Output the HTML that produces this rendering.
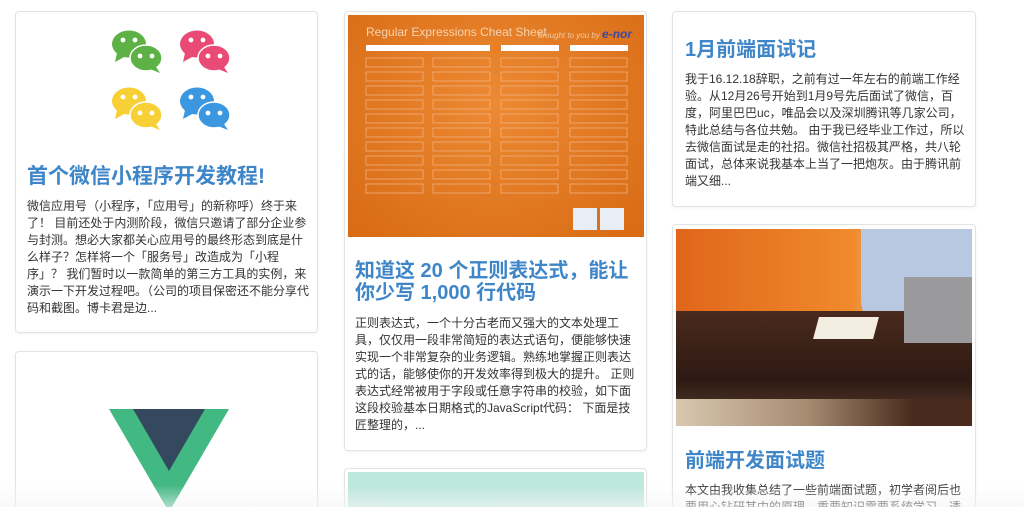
<!DOCTYPE html>
<html><head><meta charset="utf-8"><style>
*{margin:0;padding:0;box-sizing:border-box}
html,body{width:1024px;height:507px;overflow:hidden}
body{background:#fff;position:relative;font-family:"Liberation Sans","Noto Sans CJK SC",sans-serif;color:#333}
.card{position:absolute;background:#fff;border:1px solid #e3e3e3;border-radius:4px;box-shadow:0 1px 2px rgba(0,0,0,.05);overflow:hidden}
.t{color:#3f86c8;font-weight:bold;font-size:20px;line-height:22px}
.p{font-size:12px;line-height:17px;color:#333}
.fade{position:absolute;left:0;right:0;bottom:0;height:22px;background:linear-gradient(rgba(255,255,255,0),rgba(245,245,245,.6))}
</style></head><body>

<div class="card" style="left:15px;top:11px;width:303px;height:322px">
<svg width="303" height="140" style="position:absolute;left:0;top:0">
<defs><g id="w">
<ellipse cx="17" cy="13" rx="17" ry="13.5"/><path d="M5 22 L3 31 L14 25Z"/>
<ellipse cx="34" cy="27" rx="16" ry="13" stroke="#fff" stroke-width="1.5"/><path d="M44 36 L48 42 L38 38Z"/>
<circle cx="11" cy="9" r="2.4" fill="#fff"/><circle cx="23" cy="9" r="2.4" fill="#fff"/>
<circle cx="28" cy="25" r="2.4" fill="#fff"/><circle cx="40" cy="25" r="2.4" fill="#fff"/>
</g></defs>
<use href="#w" x="96" y="19" fill="#5db145"/>
<use href="#w" x="164" y="19" fill="#ea4a76"/>
<use href="#w" x="96" y="76" fill="#f6d035"/>
<use href="#w" x="164" y="76" fill="#3a97e0"/>
</svg>
<div style="position:absolute;left:11px;top:153px;width:285px">
<div class="t" style="font-size:21px;line-height:24px">首个微信小程序开发教程!</div>
<div class="p" style="margin-top:9px">微信应用号（小程序，「应用号」的新称呼）终于来了！ 目前还处于内测阶段，微信只邀请了部分企业参与封测。想必大家都关心应用号的最终形态到底是什么样子？怎样将一个「服务号」改造成为「小程序」？ 我们暂时以一款简单的第三方工具的实例，来演示一下开发过程吧。（公司的项目保密还不能分享代码和截图。博卡君是边...</div>
</div></div>

<div class="card" style="left:15px;top:351px;width:303px;height:170px">
<svg width="303" height="160" style="position:absolute;left:0;top:0">
<path d="M93 57 L213 57 L153 160Z" fill="#42b883"/>
<path d="M117 57 L189 57 L153 119Z" fill="#35495e"/>
</svg></div>

<div class="card" style="left:344px;top:11px;width:303px;height:440px">
<div style="position:absolute;left:3px;top:3px;width:296px;height:222px;background:radial-gradient(ellipse at 50% 40%,#ec8a33,#d86a14)">
<div style="position:absolute;left:18px;top:10px;color:#f6d3b0;font-size:12px">Regular Expressions Cheat Sheet</div>
<div style="position:absolute;left:190px;top:12px;color:#f3c9a0;font-size:8px;font-style:italic">brought to you by <b style="font-size:12px;color:#3b4aa0">e-nor</b></div>
<svg width="296" height="222" style="position:absolute;left:0;top:0" fill="none" stroke="#f3b68a" stroke-width=".7">
<rect x="18" y="30" width="124" height="6" fill="#fff" stroke="none"/>
<rect x="153" y="30" width="58" height="6" fill="#fff" stroke="none"/>
<rect x="222" y="30" width="58" height="6" fill="#fff" stroke="none"/>
<g id="c1"><rect x="18" y="43" width="57" height="9"/><rect x="18" y="57" width="57" height="9"/><rect x="18" y="71" width="57" height="9"/><rect x="18" y="85" width="57" height="9"/><rect x="18" y="99" width="57" height="9"/><rect x="18" y="113" width="57" height="9"/><rect x="18" y="127" width="57" height="9"/><rect x="18" y="141" width="57" height="9"/><rect x="18" y="155" width="57" height="9"/><rect x="18" y="169" width="57" height="9"/></g>
<use href="#c1" x="67"/>
<use href="#c1" x="135"/><use href="#c1" x="204"/>
<rect x="252" y="193" width="24" height="22" fill="#e7eef5" stroke="none"/><rect x="225" y="193" width="24" height="22" fill="#e7eef5" stroke="none"/>
</svg></div>
<div style="position:absolute;left:10px;top:248px;width:285px">
<div class="t">知道这 20 个正则表达式，能让你少写 1,000 行代码</div>
<div class="p" style="margin-top:11px">正则表达式，一个十分古老而又强大的文本处理工具，仅仅用一段非常简短的表达式语句，便能够快速实现一个非常复杂的业务逻辑。熟练地掌握正则表达式的话，能够使你的开发效率得到极大的提升。 正则表达式经常被用于字段或任意字符串的校验，如下面这段校验基本日期格式的JavaScript代码： 下面是技匠整理的，...</div>
</div></div>

<div class="card" style="left:344px;top:468px;width:303px;height:50px">
<div style="position:absolute;left:3px;top:3px;width:296px;height:50px;background:#bde8dc"></div></div>

<div class="card" style="left:672px;top:11px;width:304px;height:196px">
<div style="position:absolute;left:12px;top:27px;width:280px">
<div class="t">1月前端面试记</div>
<div class="p" style="margin-top:10px">我于16.12.18辞职，之前有过一年左右的前端工作经验。从12月26号开始到1月9号先后面试了微信，百度，阿里巴巴uc，唯品会以及深圳腾讯等几家公司，特此总结与各位共勉。 由于我已经毕业工作过，所以去微信面试是走的社招。微信社招极其严格，共八轮面试，总体来说我基本上当了一把炮灰。由于腾讯前端又细...</div>
</div></div>

<div class="card" style="left:672px;top:224px;width:304px;height:295px">
<div style="position:absolute;left:3px;top:4px;width:296px;height:197px;overflow:hidden;background:#e8741c">
<div style="position:absolute;left:0;top:0;width:296px;height:98px;background:linear-gradient(90deg,#e0661a,#f08a2c 60%,#c7d4e6 80%)"></div>
<div style="position:absolute;left:185px;top:0;width:111px;height:110px;background:#b7c8e0;border-radius:0 0 0 40px"></div>
<div style="position:absolute;left:0;top:82px;width:296px;height:115px;background:linear-gradient(#4a2a1c,#2e1a14 60%,#5a3e2e)"></div>
<div style="position:absolute;left:228px;top:48px;width:68px;height:66px;background:#9a9a9c"></div>
<div style="position:absolute;left:140px;top:88px;width:60px;height:22px;background:#f3ede2;transform:skewX(-15deg)"></div>
<div style="position:absolute;left:0;top:170px;width:296px;height:27px;background:linear-gradient(90deg,#d9c8b0,#a58a70 45%,#4a2a1c 80%)"></div>
</div>
<div style="position:absolute;left:12px;top:225px;width:280px">
<div class="t">前端开发面试题</div>
<div class="p" style="margin-top:10px">本文由我收集总结了一些前端面试题，初学者阅后也要用心钻研其中的原理，重要知识需要系统学习，透</div>
</div></div>

<div class="fade"></div>
</body></html>
